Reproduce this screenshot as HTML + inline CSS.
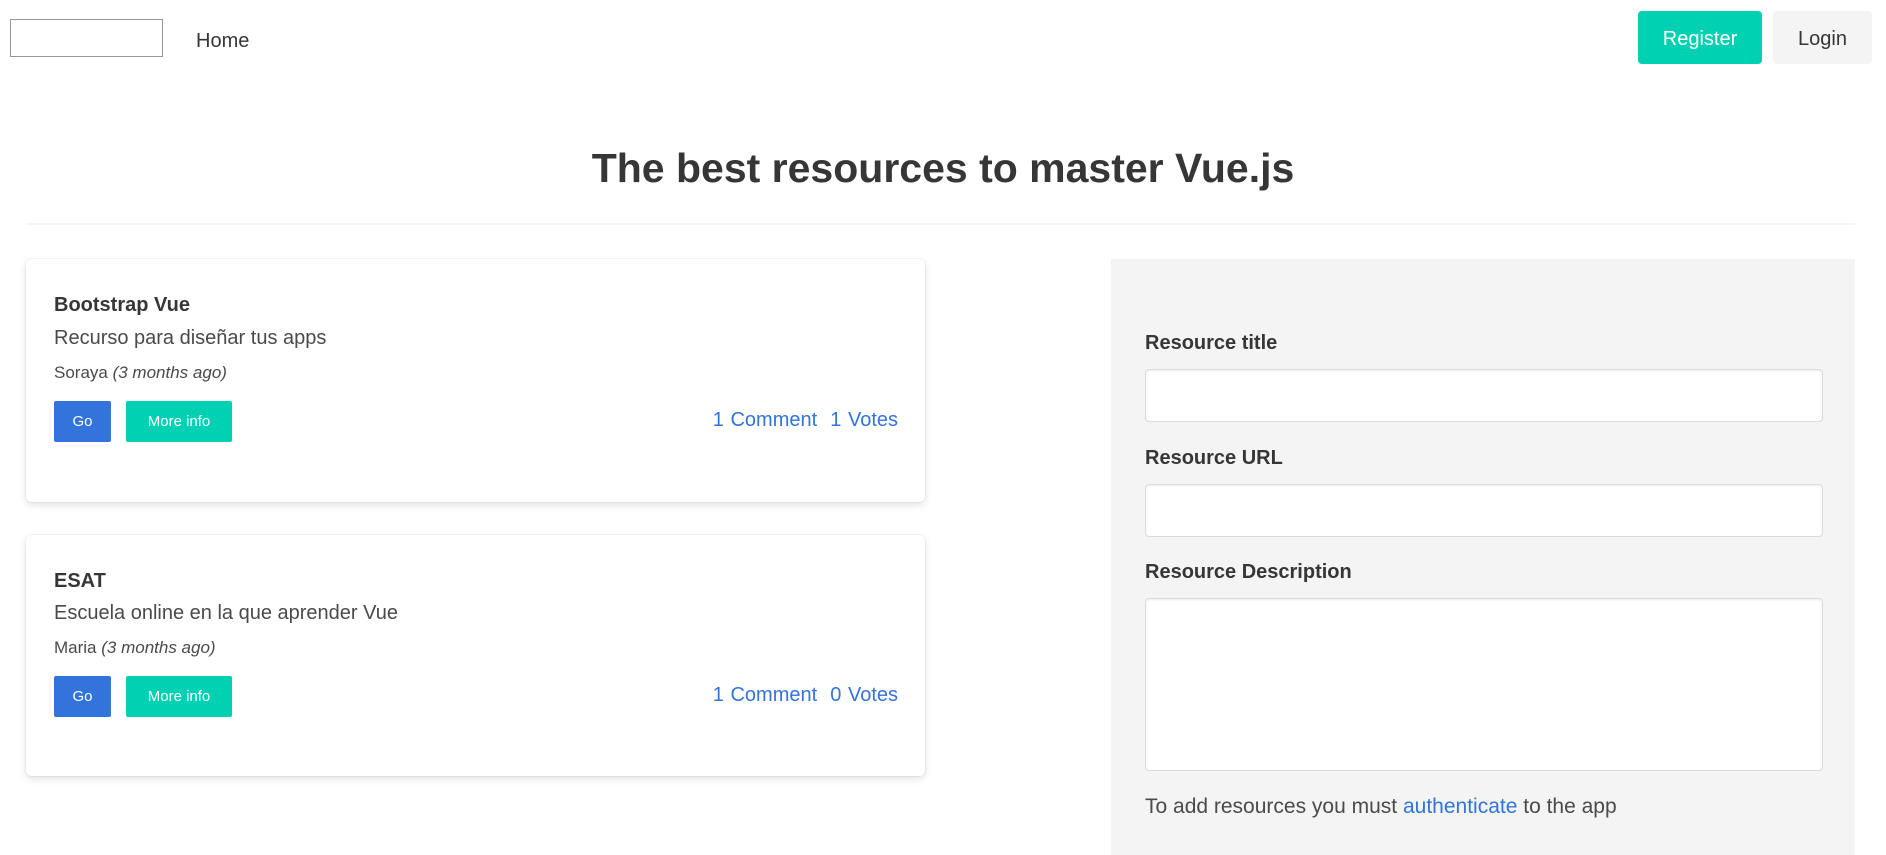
<!DOCTYPE html>
<html><head><meta charset="utf-8"><style>
*{box-sizing:border-box;margin:0;padding:0}
body{width:1886px;height:855px;overflow:hidden;background:#fff;font-family:"Liberation Sans",sans-serif;color:#4a4a4a;position:relative}
.a{position:absolute}
.btn{position:absolute;border-radius:4px;display:flex;align-items:center;justify-content:center}
.card{position:absolute;left:26px;width:899px;background:#fff;border-radius:6px;box-shadow:0 3px 8px rgba(10,10,10,.12),0 0 0 1px rgba(10,10,10,.03)}
.card .t{position:absolute;left:28px;font-weight:bold;font-size:20px;color:#363636}
.card .d{position:absolute;left:28px;font-size:20px}
.card .m{position:absolute;left:28px;font-size:17px}
.go{position:absolute;left:28px;width:57px;height:41px;background:#3273dc;color:#fff;font-size:15px;display:flex;align-items:center;justify-content:center;border-radius:2px}
.mi{position:absolute;left:100px;width:106px;height:41px;background:#00d1b2;color:#fff;font-size:15px;display:flex;align-items:center;justify-content:center;border-radius:2px}
.lk{position:absolute;right:27px;font-size:20px;color:#3273dc;word-spacing:1px}
.lbl{position:absolute;left:1145px;font-weight:bold;font-size:20px;color:#363636}
.inp{position:absolute;left:1145px;width:678px;background:#fff;border:1px solid #dbdbdb;border-radius:4px;box-shadow:inset 0 1px 2px rgba(10,10,10,.08)}
</style></head><body>
<div class="a" style="left:10px;top:19px;width:153px;height:38px;border:1px solid #999"></div>
<div class="a" style="left:196px;top:30px;font-size:20px;color:#363636">Home</div>
<div class="btn" style="left:1638px;top:11px;width:124px;height:53px;background:#00d1b2;color:#fff;font-size:20px;padding-top:4px">Register</div>
<div class="btn" style="left:1773px;top:11px;width:99px;height:53px;background:#f4f4f4;color:#363636;font-size:20px;padding-top:4px">Login</div>
<div class="a" style="left:0;width:1886px;top:145px;text-align:center;font-size:41px;font-weight:bold;color:#363636">The best resources to master Vue.js</div>
<div class="a" style="left:26px;width:1829px;top:223px;height:2px;background:#f5f5f5"></div>

<div class="card" style="top:259px;height:243px">
<div class="t" style="top:35px">Bootstrap Vue</div>
<div class="d" style="top:68px">Recurso para diseñar tus apps</div>
<div class="m" style="top:104px">Soraya <i>(3 months ago)</i></div>
<div class="go" style="top:142px">Go</div><div class="mi" style="top:142px">More info</div>
<div class="lk" style="top:150px">1 Comment &nbsp;1 Votes</div>
</div>
<div class="card" style="top:535px;height:241px">
<div class="t" style="top:35px">ESAT</div>
<div class="d" style="top:67px">Escuela online en la que aprender Vue</div>
<div class="m" style="top:103px">Maria <i>(3 months ago)</i></div>
<div class="go" style="top:141px">Go</div><div class="mi" style="top:141px">More info</div>
<div class="lk" style="top:149px">1 Comment &nbsp;0 Votes</div>
</div>

<div class="a" style="left:1111px;top:259px;width:744px;height:596px;background:#f4f4f4"></div>
<div class="lbl" style="top:332px">Resource title</div>
<div class="inp" style="top:369px;height:53px"></div>
<div class="lbl" style="top:447px">Resource URL</div>
<div class="inp" style="top:484px;height:53px"></div>
<div class="lbl" style="top:561px">Resource Description</div>
<div class="inp" style="top:598px;height:173px"></div>
<div class="a" style="left:1145px;top:795px;font-size:21px;color:#4a4a4a">To add resources you must <span style="color:#3273dc">authenticate</span> to the app</div>
</body></html>
